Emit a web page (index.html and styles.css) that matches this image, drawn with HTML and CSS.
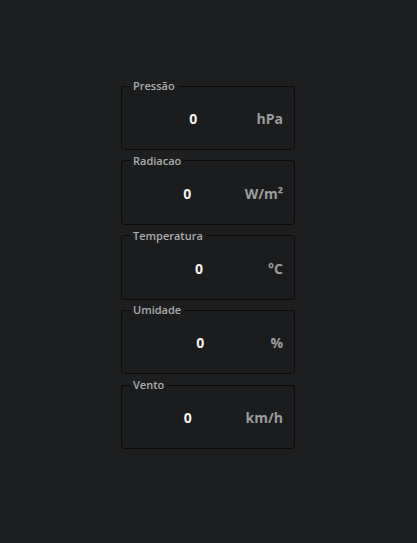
FILE: index.html
```html
<!DOCTYPE html>
<html lang="pt">
<head>
<meta charset="utf-8">
<link rel="stylesheet" href="styles.css">
</head>
<body>
<main class="panel">
  <fieldset class="gauge">
    <legend class="gauge-label">Pressão</legend>
    <div class="gauge-row"><span class="gauge-value">0</span><span class="gauge-unit">hPa</span></div>
  </fieldset>
  <fieldset class="gauge">
    <legend class="gauge-label">Radiacao</legend>
    <div class="gauge-row"><span class="gauge-value">0</span><span class="gauge-unit">W/m²</span></div>
  </fieldset>
  <fieldset class="gauge">
    <legend class="gauge-label">Temperatura</legend>
    <div class="gauge-row"><span class="gauge-value">0</span><span class="gauge-unit">°C</span></div>
  </fieldset>
  <fieldset class="gauge">
    <legend class="gauge-label">Umidade</legend>
    <div class="gauge-row"><span class="gauge-value">0</span><span class="gauge-unit">%</span></div>
  </fieldset>
  <fieldset class="gauge">
    <legend class="gauge-label">Vento</legend>
    <div class="gauge-row"><span class="gauge-value">0</span><span class="gauge-unit">km/h</span></div>
  </fieldset>
</main>
</body>
</html>
```

FILE: styles.css
```css
html, body {
  margin: 0;
  height: 100%;
  background: #1d1e20;
}

body {
  padding-right: 1px;
  box-sizing: border-box;
  font-family: "Open Sans", "Noto Sans", sans-serif;
}

.panel {
  width: 174px;
  margin: 0 auto;
  padding-top: 79px;
  display: flex;
  flex-direction: column;
  gap: 3.75px;
}

.gauge {
  margin: 0;
  padding: 0;
  border: 1px solid #0b0b0c;
  border-radius: 3px;
  background: #1b1c1e;
  min-width: 0;
}

.gauge-label {
  margin-left: 8px;
  padding: 0 3px;
  font-size: 11px;
  font-weight: 600;
  line-height: 14px;
  color: #ababab;
}

.gauge-row {
  display: flex;
  align-items: center;
  height: 56px;
  padding: 0 11px 5px 12px;
  box-sizing: border-box;
}

.gauge-value {
  flex: 1;
  text-align: center;
  font-size: 14px;
  font-weight: 700;
  color: #f2f2f2;
  margin-right: 4px;
}

.gauge-unit {
  font-size: 14px;
  font-weight: 700;
  color: #9c9c9c;
}
```
